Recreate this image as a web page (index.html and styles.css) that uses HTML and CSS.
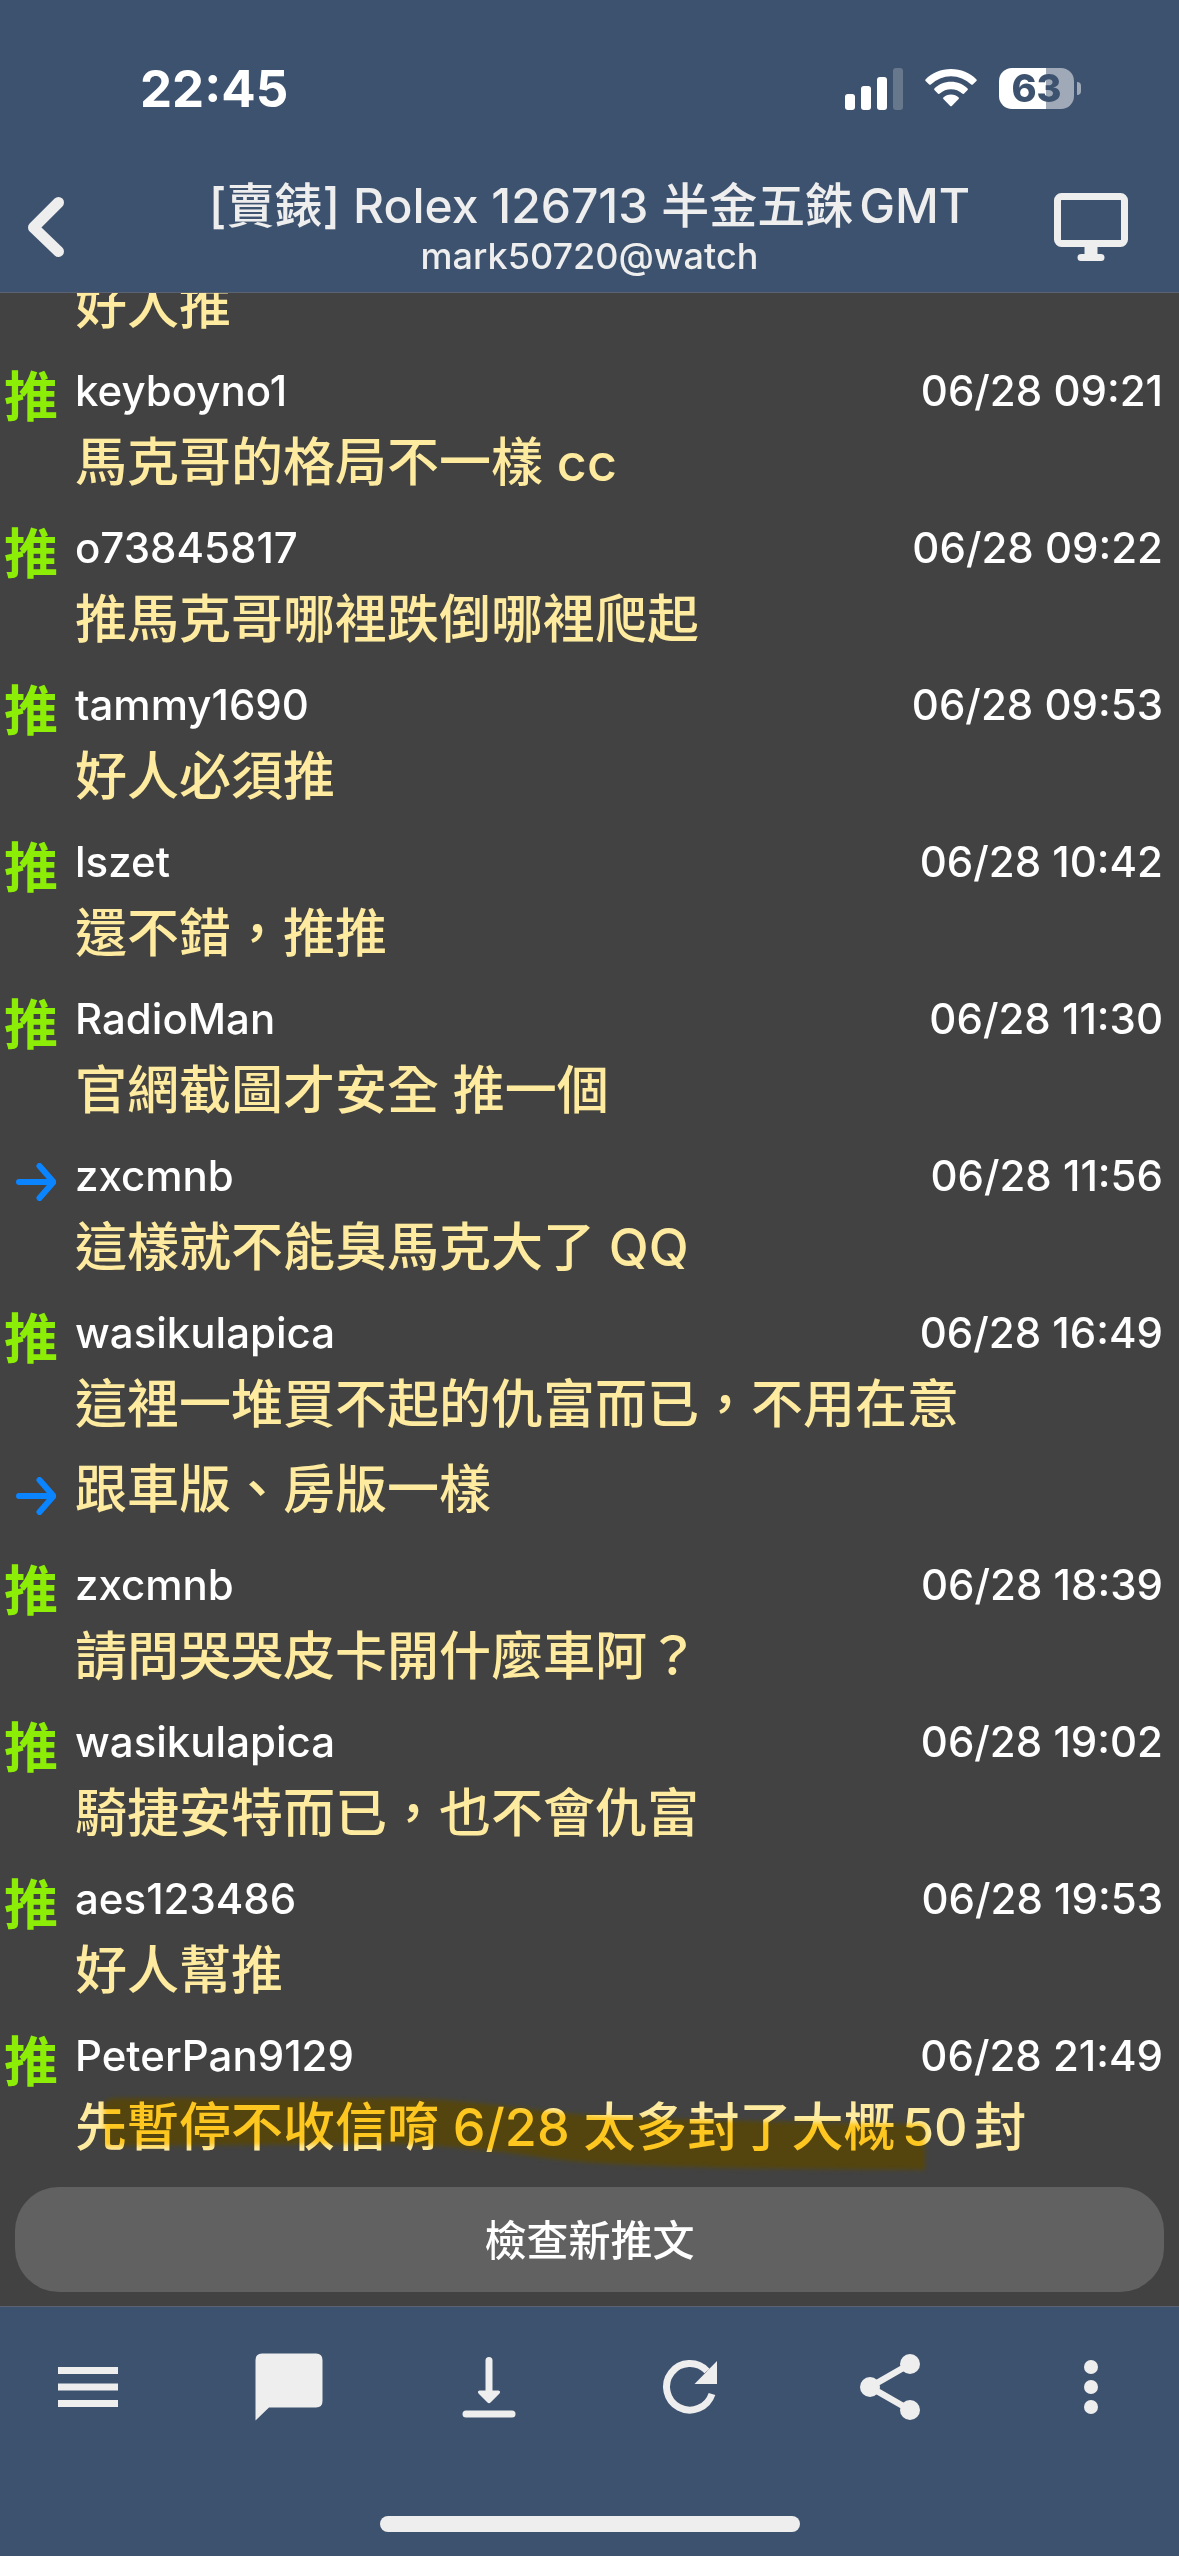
FILE: index.html
```html
<!DOCTYPE html>
<html lang="zh-Hant-TW">
<head>
<meta charset="utf-8">
<meta name="viewport" content="width=device-width, initial-scale=1">
<title>[賣錶] Rolex 126713 半金五銖GMT</title>
<link rel="stylesheet" href="styles.css">
</head>
<body>
<div class="app">
  <header class="top">
    <div class="status">
      <time class="clock">22:45</time>
      <div class="indicators">
        <svg class="signal" width="58" height="43" viewBox="0 0 58 43" aria-hidden="true">
          <rect x="0" y="27" width="10" height="16" rx="3"/>
          <rect x="16" y="19" width="10" height="24" rx="3"/>
          <rect x="32" y="10" width="10" height="33" rx="3"/>
          <rect x="48" y="1" width="10" height="42" rx="3" opacity=".22"/>
        </svg>
        <svg class="wifi" width="52" height="38" viewBox="0 0 52 38" aria-hidden="true">
          <path d="M26 0C36 0 45 4 51.500 10.400Q52 11.200 51.400 12L47.800 15.500Q47 16 46.200 15.500A29 29 0 0 0 5.800 15.500Q5 16 4.200 15.500L.6 12Q0 11.200.5 10.400C7 4 16 0 26 0Z"/>
          <path d="M26 12.800C32.500 12.800 38.400 15.400 42.600 19.500Q43.200 20.300 42.600 21L38.900 24.700Q38 25.300 37.200 24.600A16.500 16.500 0 0 0 14.800 24.600Q14 25.300 13.100 24.700L9.400 21Q8.800 20.300 9.400 19.500C13.600 15.400 19.500 12.800 26 12.800Z"/>
          <path d="M26 25.500C29 25.500 31.700 26.700 33.700 28.400Q34.200 29.200 33.600 30L26.800 37Q26 37.700 25.200 37L18.400 30Q17.800 29.200 18.300 28.400C20.300 26.700 23 25.500 26 25.500Z"/>
        </svg>
        <div class="battery"><span class="battery-level">63</span></div>
      </div>
    </div>
    <nav class="nav">
      <button class="nav-btn" type="button" aria-label="返回">
        <svg width="36" height="60" viewBox="0 0 36 60"><path d="M30.500 5.500L5.500 30.500L30.500 54.500" fill="none" stroke="currentColor" stroke-width="11" stroke-linecap="round" stroke-linejoin="round"/></svg>
      </button>
      <div class="heading">
        <h1 class="title">[賣錶] Rolex 126713 半金五銖GMT</h1>
        <p class="subtitle">mark50720@watch</p>
      </div>
      <button class="nav-btn nav-btn--end" type="button" aria-label="顯示">
        <svg width="74" height="68" viewBox="0 0 74 68"><rect x="3.500" y="3.500" width="67" height="47" rx="4" fill="none" stroke="currentColor" stroke-width="7"/><path d="M30.500 52H43.500V61H47a3.500 3.500 0 0 1 0 7H27a3.500 3.500 0 0 1 0-7H30.500Z" fill="currentColor"/></svg>
      </button>
    </nav>
  </header>

  <main class="thread">
    <ul class="comments">
      <li class="comment">
        <div class="body"><p class="message">好人推</p></div>
      </li>
      <li class="comment">
        <span class="tag">推</span>
        <div class="body"><div class="meta"><span>keyboyno1</span><time>06/28 09:21</time></div><p class="message">馬克哥的格局不一樣 cc</p></div>
      </li>
      <li class="comment">
        <span class="tag">推</span>
        <div class="body"><div class="meta"><span>o73845817</span><time>06/28 09:22</time></div><p class="message">推馬克哥哪裡跌倒哪裡爬起</p></div>
      </li>
      <li class="comment">
        <span class="tag">推</span>
        <div class="body"><div class="meta"><span>tammy1690</span><time>06/28 09:53</time></div><p class="message">好人必須推</p></div>
      </li>
      <li class="comment">
        <span class="tag">推</span>
        <div class="body"><div class="meta"><span>lszet</span><time>06/28 10:42</time></div><p class="message">還不錯，推推</p></div>
      </li>
      <li class="comment">
        <span class="tag">推</span>
        <div class="body"><div class="meta"><span>RadioMan</span><time>06/28 11:30</time></div><p class="message">官網截圖才安全 推一個</p></div>
      </li>
      <li class="comment">
        <span class="tag tag--arrow"><svg width="40" height="38" viewBox="0 0 40 38" role="img" aria-label="回應"><path d="M3 19H37M23.500 3L37.500 19L23.500 35" fill="none" stroke="currentColor" stroke-width="6" stroke-linecap="round" stroke-linejoin="round"/></svg></span>
        <div class="body"><div class="meta"><span>zxcmnb</span><time>06/28 11:56</time></div><p class="message">這樣就不能臭馬克大了 QQ</p></div>
      </li>
      <li class="comment">
        <span class="tag">推</span>
        <div class="body"><div class="meta"><span>wasikulapica</span><time>06/28 16:49</time></div><p class="message">這裡一堆買不起的仇富而已，不用在意</p></div>
      </li>
      <li class="comment comment--continued">
        <span class="tag tag--arrow"><svg width="40" height="38" viewBox="0 0 40 38" role="img" aria-label="回應"><path d="M3 19H37M23.500 3L37.500 19L23.500 35" fill="none" stroke="currentColor" stroke-width="6" stroke-linecap="round" stroke-linejoin="round"/></svg></span>
        <div class="body"><p class="message">跟車版、房版一樣</p></div>
      </li>
      <li class="comment">
        <span class="tag">推</span>
        <div class="body"><div class="meta"><span>zxcmnb</span><time>06/28 18:39</time></div><p class="message">請問哭哭皮卡開什麼車阿？</p></div>
      </li>
      <li class="comment">
        <span class="tag">推</span>
        <div class="body"><div class="meta"><span>wasikulapica</span><time>06/28 19:02</time></div><p class="message">騎捷安特而已，也不會仇富</p></div>
      </li>
      <li class="comment">
        <span class="tag">推</span>
        <div class="body"><div class="meta"><span>aes123486</span><time>06/28 19:53</time></div><p class="message">好人幫推</p></div>
      </li>
      <li class="comment">
        <span class="tag">推</span>
        <div class="body"><div class="meta"><span>PeterPan9129</span><time>06/28 21:49</time></div>
          <p class="message message--marked">
            <svg class="marker marker--under" width="822" height="80" viewBox="0 0 822 80" aria-hidden="true"><path d="M0 12Q2 6 12 6L298 6C380 8 440 21 500 24S700 31 821 32L821 78L700 77C600 76 540 74 490 71S380 54 290 52L0 54Z"/></svg>
            <span class="marked-text">先暫停不收信唷 6/28 太多封了大概50封</span>
            <svg class="marker marker--ink" width="822" height="80" viewBox="0 0 822 80" aria-hidden="true"><path d="M0 12Q2 6 12 6L298 6C380 8 440 21 500 24S700 31 821 32L821 78L700 77C600 76 540 74 490 71S380 54 290 52L0 54Z"/></svg>
          </p>
        </div>
      </li>
    </ul>
    <button class="check" type="button">檢查新推文</button>
  </main>

  <footer class="bottom">
    <div class="toolbar">
      <button class="tool" type="button" aria-label="選單">
        <svg width="80" height="80" viewBox="0 0 80 80"><path d="M10 20H70V27H10ZM10 36.500H70V43.500H10ZM10 53H70V60H10Z"/></svg>
      </button>
      <button class="tool" type="button" aria-label="留言">
        <svg width="80" height="80" viewBox="0 0 80 80"><path d="M13 6.500H67Q73.500 6.500 73.500 13V54Q73.500 60.500 67 60.500H20L6.500 73.500V13Q6.500 6.500 13 6.500Z"/></svg>
      </button>
      <button class="tool" type="button" aria-label="下載">
        <svg width="80" height="80" viewBox="0 0 80 80"><path d="M36.500 13.500a3.500 3.500 0 0 1 7 0V43.500H49.500Q52 44 50.500 46.500L41.500 55.500Q40 57 38.500 55.500L29.500 46.500Q28 44 30.500 43.500H36.500Z"/><rect x="13.500" y="63.500" width="53" height="7" rx="3.500"/></svg>
      </button>
      <button class="tool" type="button" aria-label="重新整理">
        <svg width="80" height="80" viewBox="0 0 80 80"><path d="M62 47A23.300 23.300 0 1 1 57 24" fill="none" stroke="currentColor" stroke-width="7"/><path d="M67 14V37H44.500Z"/></svg>
      </button>
      <button class="tool" type="button" aria-label="分享">
        <svg width="80" height="80" viewBox="0 0 80 80"><path d="M60 17L20 40L60 63" fill="none" stroke="currentColor" stroke-width="6.500"/><circle cx="60" cy="17" r="10"/><circle cx="20" cy="40" r="10"/><circle cx="60" cy="63" r="10"/></svg>
      </button>
      <button class="tool" type="button" aria-label="更多">
        <svg width="80" height="80" viewBox="0 0 80 80"><circle cx="40" cy="20" r="7"/><circle cx="40" cy="40" r="7"/><circle cx="40" cy="60" r="7"/></svg>
      </button>
    </div>
    <div class="home-bar"></div>
  </footer>
</div>
</body>
</html>
```

FILE: styles.css
```css
:root {
  --bar: #3d526e;
  --bar-line: #5b6272;
  --bar-text: #eeeeee;
  --page: #424242;
  --message: #feeb9f;
  --push: #8cee06;
  --arrow: #0a84ff;
}

* {
  box-sizing: border-box;
}

body,
h1,
p,
ul {
  margin: 0;
  padding: 0;
}

body {
  background: var(--page);
  color: #fff;
  font-family: Inter, "Noto Sans CJK TC", sans-serif;
  font-weight: 500;
  text-autospace: normal;
}

button {
  border: 0;
  padding: 0;
  background: none;
  color: inherit;
  font: inherit;
}

svg {
  display: block;
}

.app {
  display: flex;
  flex-direction: column;
  height: 100vh;
}

/* Top bar */

.top {
  flex: none;
  background: var(--bar);
  border-bottom: 1px solid var(--bar-line);
}

.status {
  display: flex;
  align-items: center;
  justify-content: space-between;
  height: 162px;
  padding: 14px 105px 0 140px;
}

.clock {
  font-size: 51px;
  font-weight: 700;
}

.indicators {
  display: flex;
  align-items: center;
  gap: 22px;
  fill: #fff;
}

.battery {
  position: relative;
  width: 75px;
  height: 41px;
  border-radius: 13px;
  background: linear-gradient(to right, #fff 63%, #9fa9b7 63%);
  color: var(--bar);
  font-size: 38px;
  font-weight: 800;
  line-height: 41px;
  text-align: center;
}

.battery::after {
  content: "";
  position: absolute;
  top: 14px;
  right: -7px;
  width: 4px;
  height: 13px;
  border-radius: 0 4px 4px 0;
  background: #9fa9b7;
}

.nav {
  display: flex;
  align-items: center;
  justify-content: space-between;
  height: 130px;
  padding: 0 51px 0 28px;
  color: var(--bar-text);
}

.nav-btn {
  display: flex;
  flex: 0 0 97px;
}

.nav-btn--end {
  flex-basis: 74px;
}

.heading {
  flex: 1;
  padding-top: 2px;
  text-align: center;
}

.title {
  font-size: 48px;
  font-weight: 500;
  line-height: 56px;
}

.subtitle {
  font-size: 36px;
  line-height: 44px;
}

/* Comments, scrolled to the latest one */

.thread {
  display: flex;
  flex: 1;
  flex-direction: column;
  justify-content: flex-end;
  min-height: 0;
  overflow: hidden;
}

.comments {
  list-style: none;
}

.comment {
  display: flex;
  padding: 16px 16px 5px 4px;
}

.tag {
  flex: none;
  width: 71px;
  padding-top: 2px;
  color: var(--push);
  font-size: 54px;
  font-weight: 700;
  line-height: 66px;
}

.tag--arrow {
  display: flex;
  align-items: center;
  height: 66px;
  padding-left: 12px;
  color: var(--arrow);
}

.body {
  flex: 1;
}

.comment:first-child {
  padding-left: 75px;
}

.meta {
  display: flex;
  justify-content: space-between;
  margin-bottom: 8px;
  font-size: 42px;
  line-height: 56px;
}

.message {
  color: var(--message);
  font-size: 52px;
  line-height: 72px;
}

.comment--continued {
  padding-top: 8px;
  padding-bottom: 15px;
}

.comment--continued .tag {
  height: 72px;
  padding-top: 12px;
}

.message--marked {
  position: relative;
}

.marked-text {
  position: relative;
}

/* Highlighter stroke: a base behind the words, the ink over them */

.marker {
  position: absolute;
  top: 0;
  left: 29px;
  filter: blur(2px);
}

.marker--under {
  fill: #545146;
}

.marker--ink {
  fill: #ffd832;
  mix-blend-mode: multiply;
}

.check {
  flex: none;
  height: 105px;
  margin: 18px 15px 14px;
  padding-bottom: 4px;
  border-radius: 44px;
  background: #616161;
  color: #fff;
  font-size: 42px;
}

/* Bottom bar */

.bottom {
  flex: none;
  padding-bottom: 24px;
  background: var(--bar);
  border-top: 1px solid var(--bar-line);
  color: var(--bar-text);
}

.toolbar {
  display: flex;
  justify-content: space-between;
  padding: 40px 28px;
}

.tool {
  display: flex;
  justify-content: center;
  width: 120px;
  fill: currentColor;
}

.home-bar {
  width: 420px;
  height: 16px;
  margin: 49px auto 0;
  border-radius: 8px;
  background: var(--bar-text);
}
```
